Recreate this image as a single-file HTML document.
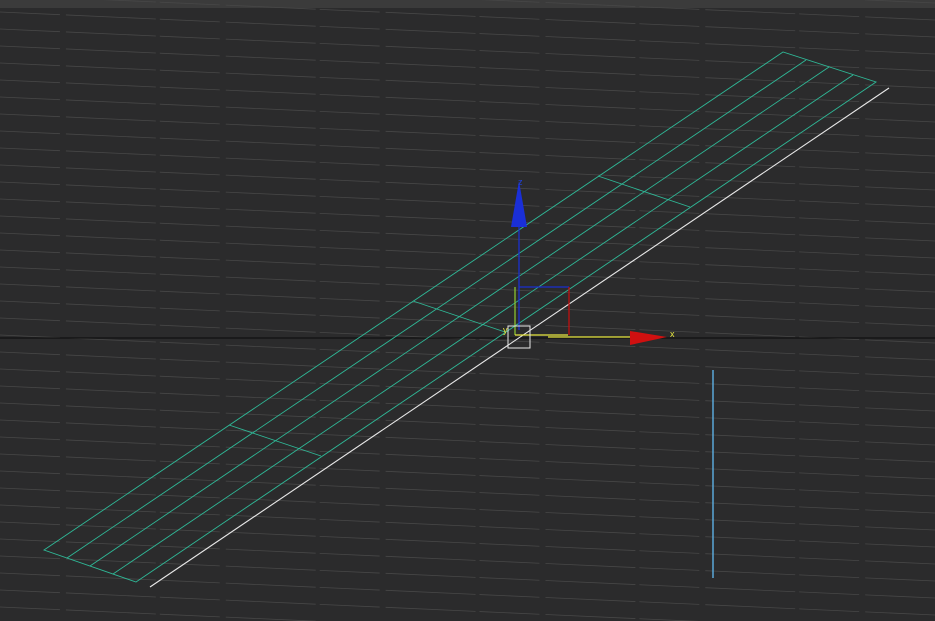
<!DOCTYPE html>
<html><head><style>
html,body{margin:0;padding:0;background:#2b2b2c;overflow:hidden}
svg{display:block}
</style></head><body>
<svg width="935" height="621" xmlns="http://www.w3.org/2000/svg">
<rect width="935" height="621" fill="#2b2b2c"/>
<rect width="935" height="8" fill="#3b3b3b"/>
<g stroke="#474747" stroke-width="0.8" stroke-dasharray="60 6 90 4">
<path d="M0 12L935 54M0 29L935 71M0 46L935 88M0 63L935 105M0 80L935 122M0 97L935 139M0 114L935 156M0 131L935 173M0 148L935 190M0 165L935 207M0 182L935 224M0 199L935 241M0 216L935 258M0 233L935 275M0 250L935 292M0 267L935 309M0 284L935 326M0 301L935 343M0 318L935 360M0 335L935 377M0 352L935 394M0 369L935 411M0 386L935 428M0 403L935 445M0 420L935 462M0 437L935 479M0 454L935 496M0 471L935 513M0 488L935 530M0 505L935 547M0 522L935 564M0 539L935 581M0 556L935 598M0 573L935 615M0 590L935 632M0 607L935 649M0 -5L935 37M0 -22L935 20M0 -39L935 3"/>
</g>
<line x1="0" y1="338" x2="935" y2="338" stroke="#111" stroke-width="1.2"/>
<g stroke="#2fb897" stroke-width="0.9" fill="none">
<path d="M44 550L783 52L876 82L136 582Z"/>
<path d="M67 558L806 60M90 566L829 67M113 574L853 75"/>
<path d="M229 425L321 456M413 301L505 332M598 176L690 207"/>
</g>
<line x1="150" y1="587" x2="889" y2="88" stroke="#e8e8e8" stroke-width="1.1"/>
<line x1="713" y1="370" x2="713" y2="578" stroke="#5aa8d8" stroke-width="1.5"/>
<g fill="none" stroke-width="1.3">
<line x1="519" y1="330" x2="519" y2="225" stroke="#1a2fd0"/>
<path d="M519 287H569" stroke="#1a2fd0"/>
<path d="M569 287V335" stroke="#c01010"/>
<path d="M515 287V335" stroke="#8ac030"/>
<path d="M515 335H568M548 337H630" stroke="#e8e840"/>
</g>
<polygon points="519,181 511,227 527,227" fill="#1a2fd8"/>
<polygon points="630,331 667,337 630,345" fill="#d01010"/>
<rect x="508" y="326" width="22" height="22" fill="none" stroke="#e8e8e8" stroke-width="1"/>
<g font-family="Liberation Sans, sans-serif" font-size="9" >
<text x="518" y="185" fill="#2040e0">z</text>
<text x="670" y="337" fill="#e8e840">x</text>
<text x="503" y="333" fill="#e8e840">y</text>
</g>
</svg>
</body></html>
